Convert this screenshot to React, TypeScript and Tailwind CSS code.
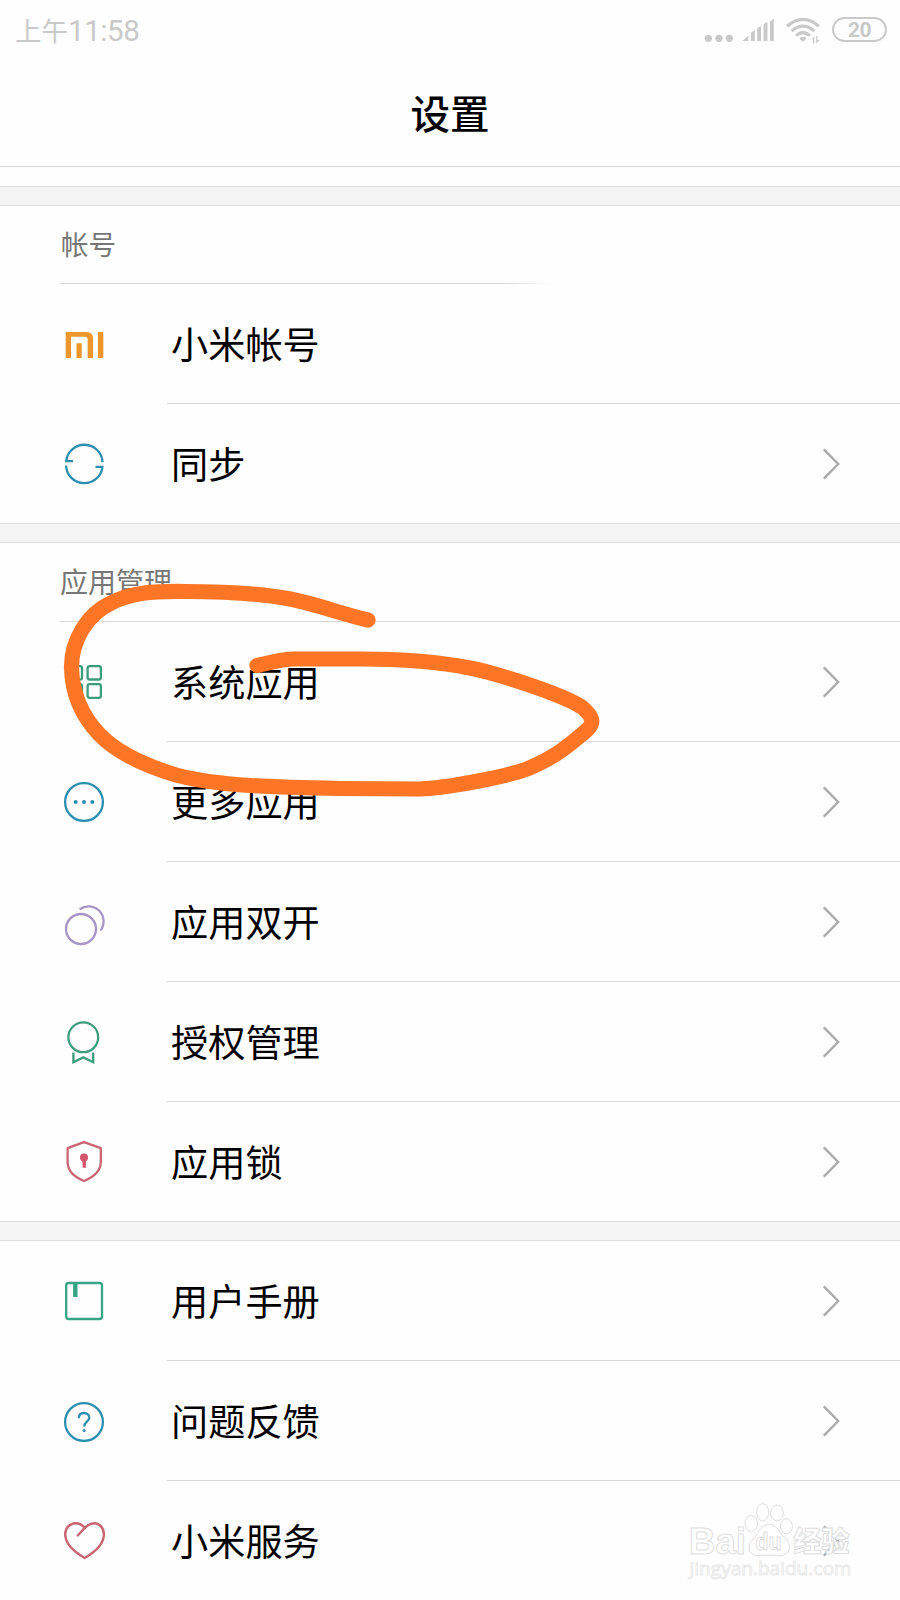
import type { ReactNode } from "react";

const GREEN = "#3c9d7c";
const BLUE = "#2d8fb0";
const RED = "#c96472";

function Icon({ color, children }: { color: string; children: ReactNode }) {
  return (
    <svg
      className="h-[61px] w-[61px] shrink-0"
      viewBox="0 0 61 61"
      fill="none"
      stroke={color}
      strokeWidth="2.3"
    >
      {children}
    </svg>
  );
}

const icons: Record<string, ReactNode> = {
  mi: (
    <Icon color="none">
      <g fill="#ec962c">
        <path d="M11.7 19H32.5Q39 19 39 25.5V45H33.7V26.5Q33.7 23.8 31 23.8H17V45H11.7Z" />
        <path d="M22.5 30.3H27.7V45H22.5ZM44 19H49.3V45H44Z" />
      </g>
    </Icon>
  ),
  sync: (
    <Icon color={BLUE}>
      <path d="M19 28.2H12.2A18.2 18.2 0 0 1 48.5 29.2" />
      <path d="M41.5 33.8H48.4A18.2 18.2 0 0 1 12.1 32.6" />
    </Icon>
  ),
  grid: (
    <Icon color={GREEN}>
      <rect x="16" y="15.2" width="12" height="13.3" rx="2" />
      <rect x="33.6" y="15.2" width="13.3" height="13.3" rx="2" />
      <rect x="16" y="33.2" width="12" height="13.6" rx="2" />
      <rect x="33.6" y="33.2" width="13.3" height="13.6" rx="2" />
    </Icon>
  ),
  more: (
    <Icon color={BLUE}>
      <circle cx="30" cy="31" r="18.9" />
      <g fill={BLUE} stroke="none">
        <circle cx="21.7" cy="31" r="2" />
        <circle cx="30" cy="31" r="2" />
        <circle cx="38.3" cy="31" r="2" />
      </g>
    </Icon>
  ),
  dual: (
    <Icon color="#a596c6">
      <circle cx="27" cy="38" r="15" />
      <path d="M25.6 18.4A15 15 0 0 1 46.6 39.4" />
    </Icon>
  ),
  badge: (
    <Icon color={GREEN}>
      <circle cx="29.3" cy="26.3" r="14.9" />
      <path d="M19.4 41.5V51.2L29.3 46.4L39.2 51.2V41.5" />
    </Icon>
  ),
  shield: (
    <Icon color={RED}>
      <path d="M30 11.2L46.8 17.2V31C46.8 39.5 41 45.5 30 50C19 45.5 13.6 39.5 13.6 31V17.2Z" strokeLinejoin="round" />
      <circle cx="30" cy="26.4" r="4" fill="#d4566a" stroke="none" />
      <path d="M28.3 28H31.9V36.8H28.7Z" fill="#d4566a" stroke="none" />
    </Icon>
  ),
  book: (
    <Icon color="#35a585">
      <rect x="12.2" y="13" width="35.8" height="36" rx="2.5" />
      <path d="M21.3 13V27" strokeWidth="4.4" />
    </Icon>
  ),
  help: (
    <Icon color={BLUE}>
      <circle cx="30" cy="32" r="18.9" />
      <path d="M24.8 28.2C24.8 24.9 27 23 30.1 23C33.3 23 35.3 25 35.3 27.7C35.3 31.3 30.2 31.9 30.2 36.4" />
      <circle cx="30.2" cy="40.6" r="1.5" fill={BLUE} stroke="none" />
    </Icon>
  ),
  heart: (
    <Icon color={RED}>
      <path
        d="M31 18.2C28.5 14.8 25.3 13.2 21.8 13.2C15.5 13.2 11.2 18 11.2 24.3C11.2 34.5 19.5 41.5 30.7 48C42 41.5 49.9 34.5 49.9 24.3C49.9 18 45.6 13.2 40.3 13.2C33.4 13.2 29.8 19.2 23.8 25.4"
        strokeWidth="2.4"
        strokeLinecap="round"
        strokeLinejoin="round"
      />
    </Icon>
  ),
};

function Chevron() {
  return (
    <svg className="mr-[58px] ml-auto h-8 w-5" viewBox="0 0 20 32" fill="none" stroke="#ababab" strokeWidth="2.4">
      <path d="M1.8 1.4L16.2 16L1.8 30.6" />
    </svg>
  );
}

function Row({
  icon,
  label,
  last = false,
  chevron = true,
}: {
  icon: string;
  label: string;
  last?: boolean;
  chevron?: boolean;
}) {
  return (
    <li>
      <div className="flex h-[119px] items-center pl-[54px]">
        {icons[icon]}
        <span className="ml-[56px] text-[37.2px] leading-none whitespace-nowrap text-black">{label}</span>
        {chevron && <Chevron />}
      </div>
      {!last && <div className="ml-[167px] h-px bg-[#d6d6d6]" />}
    </li>
  );
}

function Band() {
  return <div className="h-5 border-y border-[#dedede] bg-[#f5f5f5]" />;
}

function StatusBar() {
  return (
    <div className="flex h-[60px] items-start pt-[17px] pr-[13px] pl-[15px] text-[#c9c9c9]">
      <span className="flex text-[26.5px] leading-[26px] whitespace-nowrap">
        上午
        <span className="font-['Roboto','Noto_Sans_CJK_SC',sans-serif] text-[29.5px] leading-[29px] tracking-[-0.4px]">11:58</span>
      </span>
      <svg className="ml-auto h-7 w-[117px]" viewBox="0 0 117 28" fill="#c9c9c9">
        <circle cx="4.3" cy="21.3" r="3.6" />
        <circle cx="15" cy="21.3" r="3.6" />
        <circle cx="25.3" cy="21.3" r="3.6" />
        <path d="M38.5 24L44.3 18.4V24ZM47 24V15.4L50.8 13.2V24ZM53.2 24V11.2L57 9V24ZM59.6 24V7.2L63.4 5V24ZM66 24V4.5L69.8 1.5V24Z" />
        <g fill="none" stroke="#c9c9c9" strokeWidth="3.2">
          <path d="M83.3 9.2Q99 -4.4 114.8 9.2" />
          <path d="M87.7 14Q99 4.2 110.3 14" />
          <path d="M92 18.6Q99 12.4 106 18.6" />
        </g>
        <path d="M95.8 20.8Q99 18.8 102.2 20.8V22L99 24.8L95.8 22Z" />
        <path d="M107.8 22.2L110.3 19.2V26.5H109V22.6ZM112.2 19H113.5V23H115.6L112.2 26.5Z" />
      </svg>
      <div className="ml-[11px] flex h-[25px] w-[55px] items-center justify-center rounded-full border-[2.5px] border-[#c9c9c9] text-[21px] leading-none font-bold">
        <span className="pt-px font-['Roboto','Noto_Sans_CJK_SC',sans-serif] tracking-[-0.5px]">20</span>
      </div>
    </div>
  );
}

function Scribble() {
  return (
    <svg
      className="pointer-events-none absolute top-0 left-0 h-[1600px] w-[900px]"
      viewBox="0 0 900 1600"
      fill="none"
      stroke="#fd7525"
      strokeWidth="15.2"
      strokeLinecap="round"
      strokeLinejoin="round"
    >
      <path d="M368 620C342 614 316 604 290 599C258 593 218 591.5 185 591.5C151 591 131 593 111 603C87 614 71.500 641 71.500 667C72 692 81 715 99 734C116 752 143 765 176 775C216 786 280 787.5 340 788.5L420 789C444 788.500 506 777 527 769C553 758 565 749 587 730C594 723 594 718 583 708C567 696 500 674 470 668C440 662 410 659 360 659L293 659C279 659.500 269 663 257 665.500" />
    </svg>
  );
}

function Watermark() {
  return (
    <svg
      className="pointer-events-none absolute top-[1500px] left-[686px] h-[84px] w-[170px]"
      viewBox="0 0 170 84"
      fill="#fff"
      stroke="#dedede"
      strokeWidth="1"
    >
      <text x="3" y="53.500" fontSize="37" fontWeight="700" fontFamily="Liberation Sans, sans-serif" textLength="57" lengthAdjust="spacingAndGlyphs">
        Bai
      </text>
      <ellipse cx="65.300" cy="23.500" rx="6.300" ry="8" />
      <ellipse cx="76.700" cy="12.300" rx="6" ry="8.600" />
      <ellipse cx="91" cy="13" rx="6.300" ry="8" />
      <ellipse cx="100.300" cy="26.300" rx="6" ry="7.600" />
      <path d="M82.500 24.500C91 24.500 93 32 98 37C104 42 105 49 101 53C96 57.500 90 55 83 55C76 55 70 57.500 65 53C60.500 48 64 42 69 37C73 32 75 24.500 82.500 24.500Z" />
      <text x="69.500" y="50" fontSize="23" fontWeight="700" fontFamily="Liberation Sans, sans-serif" textLength="26" lengthAdjust="spacingAndGlyphs">
        du
      </text>
      <text x="107.500" y="52" fontSize="28" fontWeight="900" fontFamily="Noto Sans CJK SC, sans-serif">
        经验
      </text>
      <text x="3.500" y="74.500" fontSize="19" fontFamily="Open Sans, sans-serif" textLength="162" lengthAdjust="spacingAndGlyphs" stroke="#e9e9e9" strokeWidth=".9">
        jingyan.baidu.com
      </text>
    </svg>
  );
}

export default function App() {
  return (
    <main className="relative h-[1600px] w-[900px] overflow-hidden bg-[#fefefe] font-['Noto_Sans_CJK_SC',sans-serif]">
      <StatusBar />
      <header className="flex h-[107px] items-center justify-center border-b border-[#d6d6d6] pb-[3px] text-[39.500px] font-medium text-black">
        设置
      </header>
      <div className="h-[19px]" />
      <Band />
      <section>
        <h2 className="flex h-[77px] items-center pb-[2px] pl-[61px] text-[27.500px] text-[#777]">帐号</h2>
        <div className="ml-[60px] h-px w-[490px] bg-linear-to-r from-[#d6d6d6] from-90% to-transparent" />
        <ul>
          <Row icon="mi" label="小米帐号" chevron={false} />
          <Row icon="sync" label="同步" last />
        </ul>
      </section>
      <Band />
      <section>
        <h2 className="flex h-[78px] items-center pb-[2px] pl-[60px] text-[28px] text-[#777]">应用管理</h2>
        <div className="ml-[60px] h-px bg-[#d6d6d6]" />
        <ul>
          <Row icon="grid" label="系统应用" />
          <Row icon="more" label="更多应用" />
          <Row icon="dual" label="应用双开" />
          <Row icon="badge" label="授权管理" />
          <Row icon="shield" label="应用锁" last />
        </ul>
      </section>
      <Band />
      <ul>
        <Row icon="book" label="用户手册" />
        <Row icon="help" label="问题反馈" />
        <Row icon="heart" label="小米服务" last />
      </ul>
      <Scribble />
      <Watermark />
    </main>
  );
}
